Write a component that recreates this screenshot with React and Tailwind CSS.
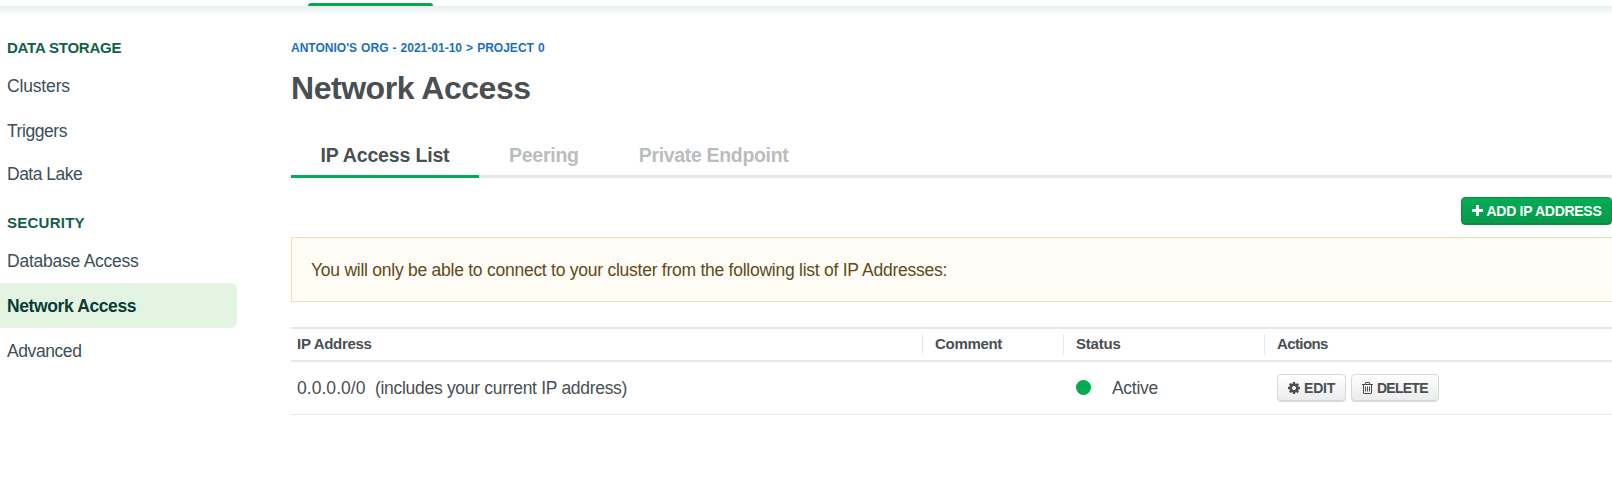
function PlusIcon() {
  return (
    <svg className="h-[14px] w-[11px]" viewBox="192 0 1408 1792" fill="currentColor">
      <path d="M1600 736v192q0 40-28 68t-68 28h-416v416q0 40-28 68t-68 28h-192q-40 0-68-28t-28-68v-416h-416q-40 0-68-28t-28-68v-192q0-40 28-68t68-28h416v-416q0-40 28-68t68-28h192q40 0 68 28t28 68v416h416q40 0 68 28t28 68z" />
    </svg>
  );
}

function CogIcon() {
  return (
    <svg className="h-[14px] w-[12px]" viewBox="128 0 1536 1792" fill="currentColor">
      <path d="M1152 896q0-106-75-181t-181-75-181 75-75 181 75 181 181 75 181-75 75-181zm512-109v222q0 12-8 23t-20 13l-185 28q-19 54-39 91 35 50 107 138 10 12 10 25t-9 23q-27 37-99 108t-94 71q-12 0-26-9l-138-108q-44 23-91 38-16 136-29 186-7 28-36 28h-222q-14 0-24.500-8.500t-11.500-21.500l-28-184q-49-16-90-37l-141 107q-10 9-25 9-14 0-25-11-126-114-165-168-7-10-7-23 0-12 8-23 15-21 51-66.500t54-70.500q-27-50-41-99l-183-27q-13-2-21-12.500t-8-23.500v-222q0-12 8-23t19-13l186-28q14-46 39-92-40-57-107-138-10-12-10-24 0-10 9-23 26-36 98.500-107.500t94.500-71.500q13 0 26 10l138 107q44-23 91-38 16-136 29-186 7-28 36-28h222q14 0 24.500 8.500t11.500 21.500l28 184q49 16 90 37l142-107q9-9 24-9 13 0 25 10 129 119 165 170 7 8 7 22 0 12-8 23-15 21-51 66.500t-54 70.500q26 50 41 98l183 28q13 2 21 12.500t8 23.500z" />
    </svg>
  );
}

function TrashIcon() {
  return (
    <svg className="h-[14px] w-[11px]" viewBox="192 0 1408 1792" fill="currentColor">
      <path d="M704 736v576q0 14-9 23t-23 9h-64q-14 0-23-9t-9-23v-576q0-14 9-23t23-9h64q14 0 23 9t9 23zm256 0v576q0 14-9 23t-23 9h-64q-14 0-23-9t-9-23v-576q0-14 9-23t23-9h64q14 0 23 9t9 23zm256 0v576q0 14-9 23t-23 9h-64q-14 0-23-9t-9-23v-576q0-14 9-23t23-9h64q14 0 23 9t9 23zm128 724v-948h-896v948q0 22 7 40.500t14.500 27 10.500 8.500h832q3 0 10.500-8.500t14.500-27 7-40.500zm-672-1076h448l-48-117q-7-9-17-11h-317q-10 2-17 11zm928 32v64q0 14-9 23t-23 9h-96v948q0 83-47 143.500t-113 60.500h-832q-66 0-113-58.500t-47-141.500v-952h-96q-14 0-23-9t-9-23v-64q0-14 9-23t23-9h309l70-167q15-37 54-63t79-26h320q40 0 79 26t54 63l70 167h309q14 0 23 9t9 23z" />
    </svg>
  );
}

function SideHeading({ children, className }) {
  return (
    <h4 className={`flex h-5 items-center pl-[7px] text-[15px] font-bold text-[#116149] ${className}`}>
      {children}
    </h4>
  );
}

function SideItem({ children, className }) {
  return (
    <a className={`flex items-center rounded-r-[6px] pl-[7px] text-[17.5px] ${className}`}>{children}</a>
  );
}

function Sidebar() {
  return (
    <nav className="w-[237px] shrink-0 pt-8">
      <SideHeading className="tracking-[-0.22px]">DATA STORAGE</SideHeading>
      <div className="flex flex-col pt-[5px]">
        <SideItem className="h-[45px] pt-[2px] tracking-[-0.16px] text-[#3d4f58]">Clusters</SideItem>
        <SideItem className="h-[45px] pt-[2px] tracking-[-0.45px] text-[#3d4f58]">Triggers</SideItem>
        <SideItem className="h-[42px] tracking-[-0.5px] text-[#3d4f58]">Data Lake</SideItem>
      </div>
      <SideHeading className="mt-[18px] tracking-[0.25px]">SECURITY</SideHeading>
      <div className="flex flex-col pt-[5px]">
        <SideItem className="h-[45px] pt-[2px] tracking-[-0.24px] text-[#3d4f58]">Database Access</SideItem>
        <SideItem className="h-[45px] bg-[#e3f4e3] pt-[2px] font-bold tracking-[-0.39px] text-[#0b3b35]">Network Access</SideItem>
        <SideItem className="h-[45px] pt-[2px] tracking-[-0.42px] text-[#3d4f58]">Advanced</SideItem>
      </div>
    </nav>
  );
}

function GreyButton({ icon, children, className }) {
  return (
    <button
      className={`flex h-7 items-center gap-[4px] rounded-[4px] border border-[#d5d9d7] bg-linear-to-b from-white to-[#ebebeb] pb-px pl-[10px] text-[14px] font-bold shadow-[inset_0_-1px_0_#d5d9d7] ${className}`}
    >
      {icon}
      <span className="pt-[2px]">{children}</span>
    </button>
  );
}

export default function App() {
  return (
    <div className="h-[501px] w-full overflow-hidden bg-white font-['Liberation_Sans',Arial,sans-serif] text-[#494f52]">
      <div className="flex h-[6px] items-end pl-[308px]">
        <div className="h-[3px] w-[125px] rounded-t-[3px] bg-[#03aa54]" />
      </div>
      <div className="flex h-[495px] bg-[linear-gradient(to_bottom,#e7edf0_0px,#f1f4f6_4px,#fbfcfc_8px,#ffffff_11px)]">
        <Sidebar />
        <main className="ml-[54px] min-w-0 flex-1 pt-[32px]">
          <div className="flex h-5 w-max origin-left scale-x-[0.89] items-center text-[13.5px] font-bold [word-spacing:0.8px] whitespace-pre text-[#1a6fbf]">
            ANTONIO'S ORG - 2021-01-10 &gt; PROJECT 0
          </div>
          <h1 className="flex h-[61px] items-center pb-[2px] text-[32px] font-bold tracking-[-0.46px]">Network Access</h1>
          <div className="mt-[16px] flex h-[43px] border-b-[3px] border-[#e8e8e8] text-[19.5px] font-bold text-[#babdbe]">
            <div className="-mb-[3px] flex w-[188px] justify-center border-b-[3px] border-[#03aa54] pt-px tracking-[-0.16px] text-[#494f52]">
              <span className="flex items-center">IP Access List</span>
            </div>
            <div className="ml-[30px] flex items-center pt-px tracking-[-0.25px]">Peering</div>
            <div className="ml-[60px] flex items-center pt-px tracking-[-0.33px]">Private Endpoint</div>
          </div>
          <div className="flex h-[59px] justify-end pt-[19px]">
            <button className="flex h-7 w-[151px] items-center gap-[4px] rounded-[4px] border border-[#0d8a41] bg-linear-to-b from-[#04ad54] to-[#039a4a] pb-px pl-[9.5px] text-[14px] font-bold tracking-[-0.29px] whitespace-nowrap text-white shadow-[inset_0_-1px_0_#0d8a41]">
              <PlusIcon />
              <span className="pt-[2px]">ADD IP ADDRESS</span>
            </button>
          </div>
          <div className="flex h-[65px] items-center border border-r-0 border-[#f0deb4] bg-[#fffcf5] pt-[2px] pl-[19px] text-[17.5px] tracking-[-0.252px] text-[#5e4a1c]">
            You will only be able to connect to your cluster from the following list of IP Addresses:
          </div>
          <div className="mt-[25px]">
            <div className="grid h-[35px] grid-cols-[631px_141px_201px_1fr] items-center border-y-2 border-[#e8e8e8] text-[15px] font-bold">
              <div className="pl-[6px] tracking-[-0.286px]">IP Address</div>
              <div className="flex h-[21px] items-center border-l border-[#e8e8e8] pl-3 tracking-[-0.3px]">Comment</div>
              <div className="flex h-[21px] items-center border-l border-[#e8e8e8] pl-3 tracking-[-0.2px]">Status</div>
              <div className="flex h-[21px] items-center border-l border-[#e8e8e8] pl-3 tracking-[-0.6px]">Actions</div>
            </div>
            <div className="grid h-[53px] grid-cols-[631px_141px_201px_1fr] items-center border-b border-[#e8e8e8] text-[17.5px]">
              <div className="flex gap-[9.5px] pl-[6px]">
                <span className="tracking-[0.043px]">0.0.0.0/0</span>
                <span className="tracking-[-0.3px]">(includes your current IP address)</span>
              </div>
              <div />
              <div className="flex items-center pl-[13px]">
                <span className="-mt-px size-[15px] rounded-full bg-[#03aa54]" />
                <span className="ml-[21px] tracking-[-0.3px]">Active</span>
              </div>
              <div className="flex gap-[5px] pl-[13px]">
                <GreyButton icon={<CogIcon />} className="w-[69px] tracking-[-0.2px]">EDIT</GreyButton>
                <GreyButton icon={<TrashIcon />} className="w-[88px] tracking-[-0.75px]">DELETE</GreyButton>
              </div>
            </div>
          </div>
        </main>
      </div>
    </div>
  );
}
